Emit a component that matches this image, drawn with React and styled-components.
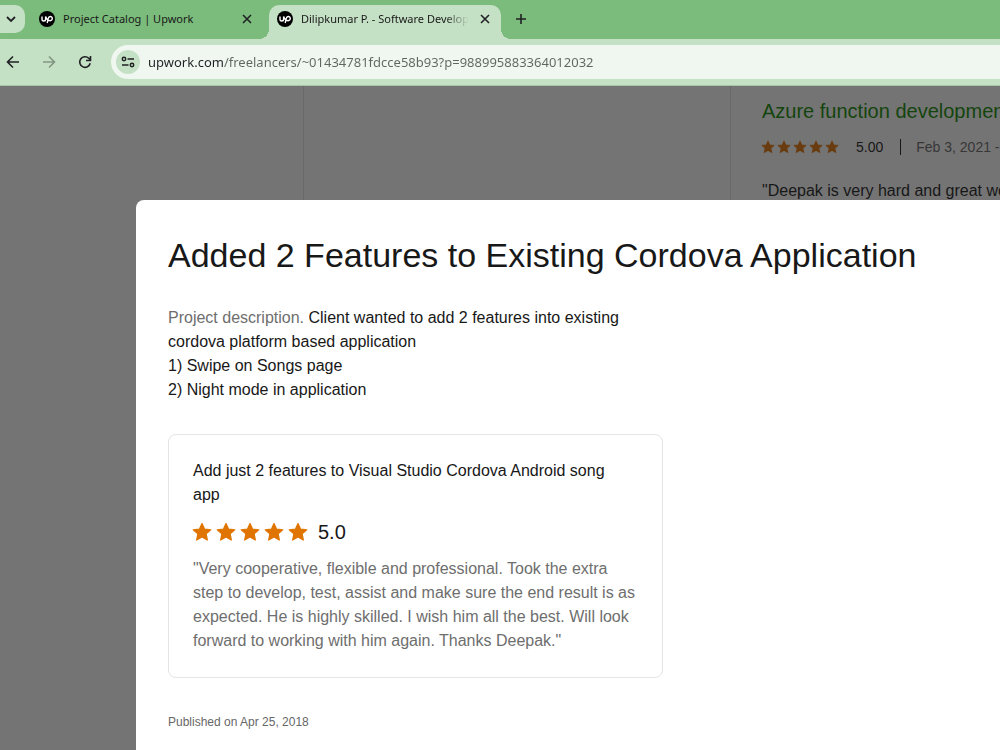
import styled, { createGlobalStyle } from "styled-components";

const GlobalStyle = createGlobalStyle`
  * {
    box-sizing: border-box;
  }

  html,
  body,
  #root {
    height: 100%;
    margin: 0;
  }

  body {
    overflow: hidden;
    background: #fff;
    color: #181818;
    font-family: "Liberation Sans", Arial, sans-serif;
    font-size: 16px;
    line-height: 24px;
  }

  h1,
  h2,
  h3,
  p {
    margin: 0;
    font-weight: 400;
  }

  button {
    display: grid;
    place-items: center;
    padding: 0;
    border: 0;
    background: none;
    color: #202124;
  }
`;

const STAR_PATH = "M8 1.2 10 5.7 15 6.2 11.3 9.5 12.3 14.4 8 11.9 3.7 14.4 4.7 9.5 1 6.2 6 5.7Z";

const tabs = [
  { title: "Project Catalog | Upwork", active: false },
  { title: "Dilipkumar P. - Software Developer", active: true },
];

const Stars = ({ size, gap }) => (
  <StarRow $gap={gap} role="img" aria-label="5 out of 5 stars">
    {[1, 2, 3, 4, 5].map((n) => (
      <svg key={n} width={size} height={size} viewBox="0 0 16 16">
        <path d={STAR_PATH} />
      </svg>
    ))}
  </StarRow>
);

const UpworkIcon = () => (
  <svg width="16" height="16" viewBox="0 0 16 16" aria-hidden="true">
    <circle cx="8" cy="8" r="8" />
    <path
      d="M3 5.5v2.7a1.8 1.8 0 0 0 3.6 0V5.5c.6 2 1.6 3.3 2.8 4.2M8.2 12 9.2 7.6c.3-1.4 1-2.1 2-2.1a2.1 2.1 0 1 1 0 4.2c-1.2 0-2.2-.7-3-1.6"
      fill="none"
      stroke="#fff"
      strokeWidth="1.4"
    />
  </svg>
);

const CloseIcon = () => (
  <svg width="10" height="10" viewBox="0 0 10 10" stroke="currentColor" strokeWidth="1.6">
    <path d="M1 1l8 8M9 1L1 9" />
  </svg>
);

export default function App() {
  return (
    <Browser>
      <GlobalStyle />
      <TabStrip>
        <TabSearch aria-label="Search tabs">
          <svg width="10" height="10" viewBox="0 0 10 10" fill="none" stroke="currentColor" strokeWidth="1.8">
            <path d="M1 3l4 4 4-4" />
          </svg>
        </TabSearch>
        {tabs.map(({ title, active }) => (
          <Tab key={title} $active={active}>
            <UpworkIcon />
            <TabTitle $active={active}>{title}</TabTitle>
            <TabClose aria-label="Close tab">
              <CloseIcon />
            </TabClose>
          </Tab>
        ))}
        <NewTab aria-label="New tab">
          <svg width="12" height="12" viewBox="0 0 12 12" stroke="currentColor" strokeWidth="1.6">
            <path d="M6 1v10M1 6h10" />
          </svg>
        </NewTab>
      </TabStrip>

      <Toolbar>
        <NavButton aria-label="Back">
          <svg width="14" height="14" viewBox="0 0 14 14" fill="none" stroke="currentColor" strokeWidth="1.6">
            <path d="M13 7H2M7 1.5 1.5 7 7 12.5" />
          </svg>
        </NavButton>
        <NavButton aria-label="Forward" disabled>
          <svg width="14" height="14" viewBox="0 0 14 14" fill="none" stroke="currentColor" strokeWidth="1.6">
            <path d="M1 7h11M7 1.5 12.5 7 7 12.5" />
          </svg>
        </NavButton>
        <NavButton aria-label="Reload">
          <svg width="14" height="14" viewBox="0 0 14 14" fill="none" stroke="currentColor" strokeWidth="1.6">
            <path d="M12.2 8.2A5.3 5.3 0 1 1 10.8 3.3L12.3 4.8M12.5 1v4.5H8" />
          </svg>
        </NavButton>
        <AddressBar>
          <SiteInfo aria-label="View site information">
            <svg width="14" height="12" viewBox="0 0 14 12" fill="none" stroke="currentColor" strokeWidth="1.5">
              <circle cx="3" cy="3" r="1.7" />
              <path d="M6.5 3H13M1 9h6.5" />
              <circle cx="11" cy="9" r="1.7" />
            </svg>
          </SiteInfo>
          <UrlInput
            aria-label="Address"
            defaultValue="upwork.com/freelancers/~01434781fdcce58b93?p=988995883364012032"
          />
        </AddressBar>
      </Toolbar>

      <Page>
        <Profile>
          <Gutter />
          <Sidebar />
          <History>
            <JobTitle href="#job">Azure function development</JobTitle>
            <JobMeta>
              <Stars size={14} gap={2} />
              <span>5.00</span>
              <JobDate>Feb 3, 2021 - Mar 10, 2021</JobDate>
            </JobMeta>
            <p>"Deepak is very hard and great worker."</p>
          </History>
        </Profile>

        <Backdrop>
          <Modal role="dialog" aria-labelledby="project-title">
            <Title id="project-title">Added 2 Features to Existing Cordova Application</Title>
            <Description>
              <Muted>Project description.</Muted> Client wanted to add 2 features into existing
              cordova platform based application
              <br />
              1) Swipe on Songs page
              <br />
              2) Night mode in application
            </Description>
            <Review>
              <ReviewTitle>Add just 2 features to Visual Studio Cordova Android song app</ReviewTitle>
              <Rating>
                <Stars size={20} gap={4} />
                <span>5.0</span>
              </Rating>
              <Muted as="p">
                "Very cooperative, flexible and professional. Took the extra step to develop, test,
                assist and make sure the end result is as expected. He is highly skilled. I wish him
                all the best. Will look forward to working with him again. Thanks Deepak."
              </Muted>
            </Review>
            <Published>Published on Apr 25, 2018</Published>
          </Modal>
        </Backdrop>
      </Page>
    </Browser>
  );
}

const Browser = styled.div`
  display: flex;
  flex-direction: column;
  height: 100%;
`;

const TabStrip = styled.div`
  display: flex;
  flex-shrink: 0;
  height: 39px;
  padding-top: 5px;
  background: #7bbc7c;
  font-family: "Noto Sans", sans-serif;
  font-size: 11px;
`;

const TabSearch = styled.button`
  && {
    width: 25px;
    height: 28px;
    padding-right: 3px;
    border-radius: 0 10px 10px 0;
    background: #c5e1c5;
  }
`;

const Tab = styled.div`
  position: relative;
  display: flex;
  align-items: center;
  width: ${({ $active }) => ($active ? "232px" : "230px")};
  margin-left: ${({ $active }) => ($active ? "14px" : "0")};
  padding: 0 ${({ $active }) => ($active ? "8px" : "0")} 6px
    ${({ $active }) => ($active ? "8px" : "14px")};
  border-radius: 10px 10px 0 0;
  background: ${({ $active }) => ($active ? "#c5e1c5" : "none")};

  &::before,
  &::after {
    content: ${({ $active }) => ($active ? '""' : "none")};
    position: absolute;
    bottom: 0;
    width: 10px;
    height: 10px;
  }

  &::before {
    right: 100%;
    background: radial-gradient(circle at 0 0, transparent 10px, #c5e1c5 10px);
  }

  &::after {
    left: 100%;
    background: radial-gradient(circle at 100% 0, transparent 10px, #c5e1c5 10px);
  }

  svg {
    flex-shrink: 0;
  }
`;

const TabTitle = styled.span`
  flex: 1;
  min-width: 0;
  margin: 0 8px;
  overflow: hidden;
  white-space: nowrap;
  mask-image: ${({ $active }) =>
    $active ? "linear-gradient(to left, transparent, #000 24px)" : "none"};
`;

const TabClose = styled.button`
  width: 16px;
  height: 16px;
`;

const NewTab = styled.button`
  width: 40px;
  height: 28px;
`;

const Toolbar = styled.div`
  display: flex;
  flex-shrink: 0;
  align-items: center;
  gap: 22px;
  height: 47px;
  padding-left: 6px;
  background: #c5e1c5;
  border-bottom: 1px solid #a9c5a9;
`;

const NavButton = styled.button`
  width: 14px;
  height: 28px;

  &:disabled {
    color: #829682;
  }
`;

const AddressBar = styled.div`
  display: flex;
  flex: 1;
  align-items: center;
  gap: 8px;
  height: 34px;
  margin-left: -3px;
  padding-left: 5px;
  border-radius: 17px 0 0 17px;
  background: #f0f7f0;
`;

const SiteInfo = styled.button`
  && {
    width: 24px;
    height: 24px;
    border-radius: 50%;
    background: #c5e1c5;
  }
`;

const UrlInput = styled.input`
  flex: 1;
  min-width: 0;
  height: 24px;
  padding: 0;
  border: 0;
  outline: 0;
  /* the host is darker than the rest of the address */
  background: linear-gradient(to right, #202124 75px, #5f6660 75px);
  background-clip: text;
  color: transparent;
  font: 13px "Noto Sans", sans-serif;
`;

const Page = styled.main`
  position: relative;
  flex: 1;
  min-height: 0;
  overflow: hidden;
`;

const Profile = styled.div`
  display: grid;
  grid-template-columns: 303px 427px 1fr;
  height: 100%;
  white-space: nowrap;
`;

const Gutter = styled.div``;

const Sidebar = styled.aside`
  border-left: 1px solid #e4e4e4;
`;

const History = styled.section`
  min-width: 0;
  padding: 13px 0 0 31px;
  border-left: 1px solid #e4e4e4;
`;

const JobTitle = styled.a`
  color: #108a00;
  font-size: 20px;
  text-decoration: none;
`;

const JobMeta = styled.div`
  display: flex;
  align-items: center;
  gap: 17px;
  margin: 10px 0 20px;
  font-size: 14px;
`;

const JobDate = styled.span`
  padding-left: 15px;
  border-left: 1px solid #181818;
  color: #676767;
  line-height: 16px;
`;

const StarRow = styled.span`
  display: flex;
  gap: ${({ $gap }) => $gap}px;
  margin-left: -1px;
  fill: #e07400;
  stroke: #e07400;
  stroke-linejoin: round;

  svg {
    overflow: visible;
  }
`;

const Backdrop = styled.div`
  position: absolute;
  inset: 0;
  padding: 114px 0 0 136px;
  background: rgba(24, 24, 24, 0.6);
`;

const Modal = styled.section`
  height: 100%;
  padding: 32px;
  border-radius: 8px 0 0 0;
  background: #fff;
`;

const Title = styled.h1`
  font-size: 34px;
  line-height: 46px;
  white-space: nowrap;
`;

const Description = styled.p`
  max-width: 495px;
  margin: 28px 0 32px;
`;

const Muted = styled.span`
  color: #6e6e6e;
`;

const Review = styled.article`
  max-width: 495px;
  padding: 24px;
  border: 1px solid #e4e4e4;
  border-radius: 8px;
`;

const ReviewTitle = styled.h3`
  padding-right: 16px;
  font-size: 16px;
`;

const Rating = styled.div`
  display: flex;
  align-items: center;
  gap: 10px;
  margin: 13px 0;
  font-size: 20px;
`;

const Published = styled.p`
  margin-top: 32px;
  color: #676767;
  font-size: 12px;
`;
